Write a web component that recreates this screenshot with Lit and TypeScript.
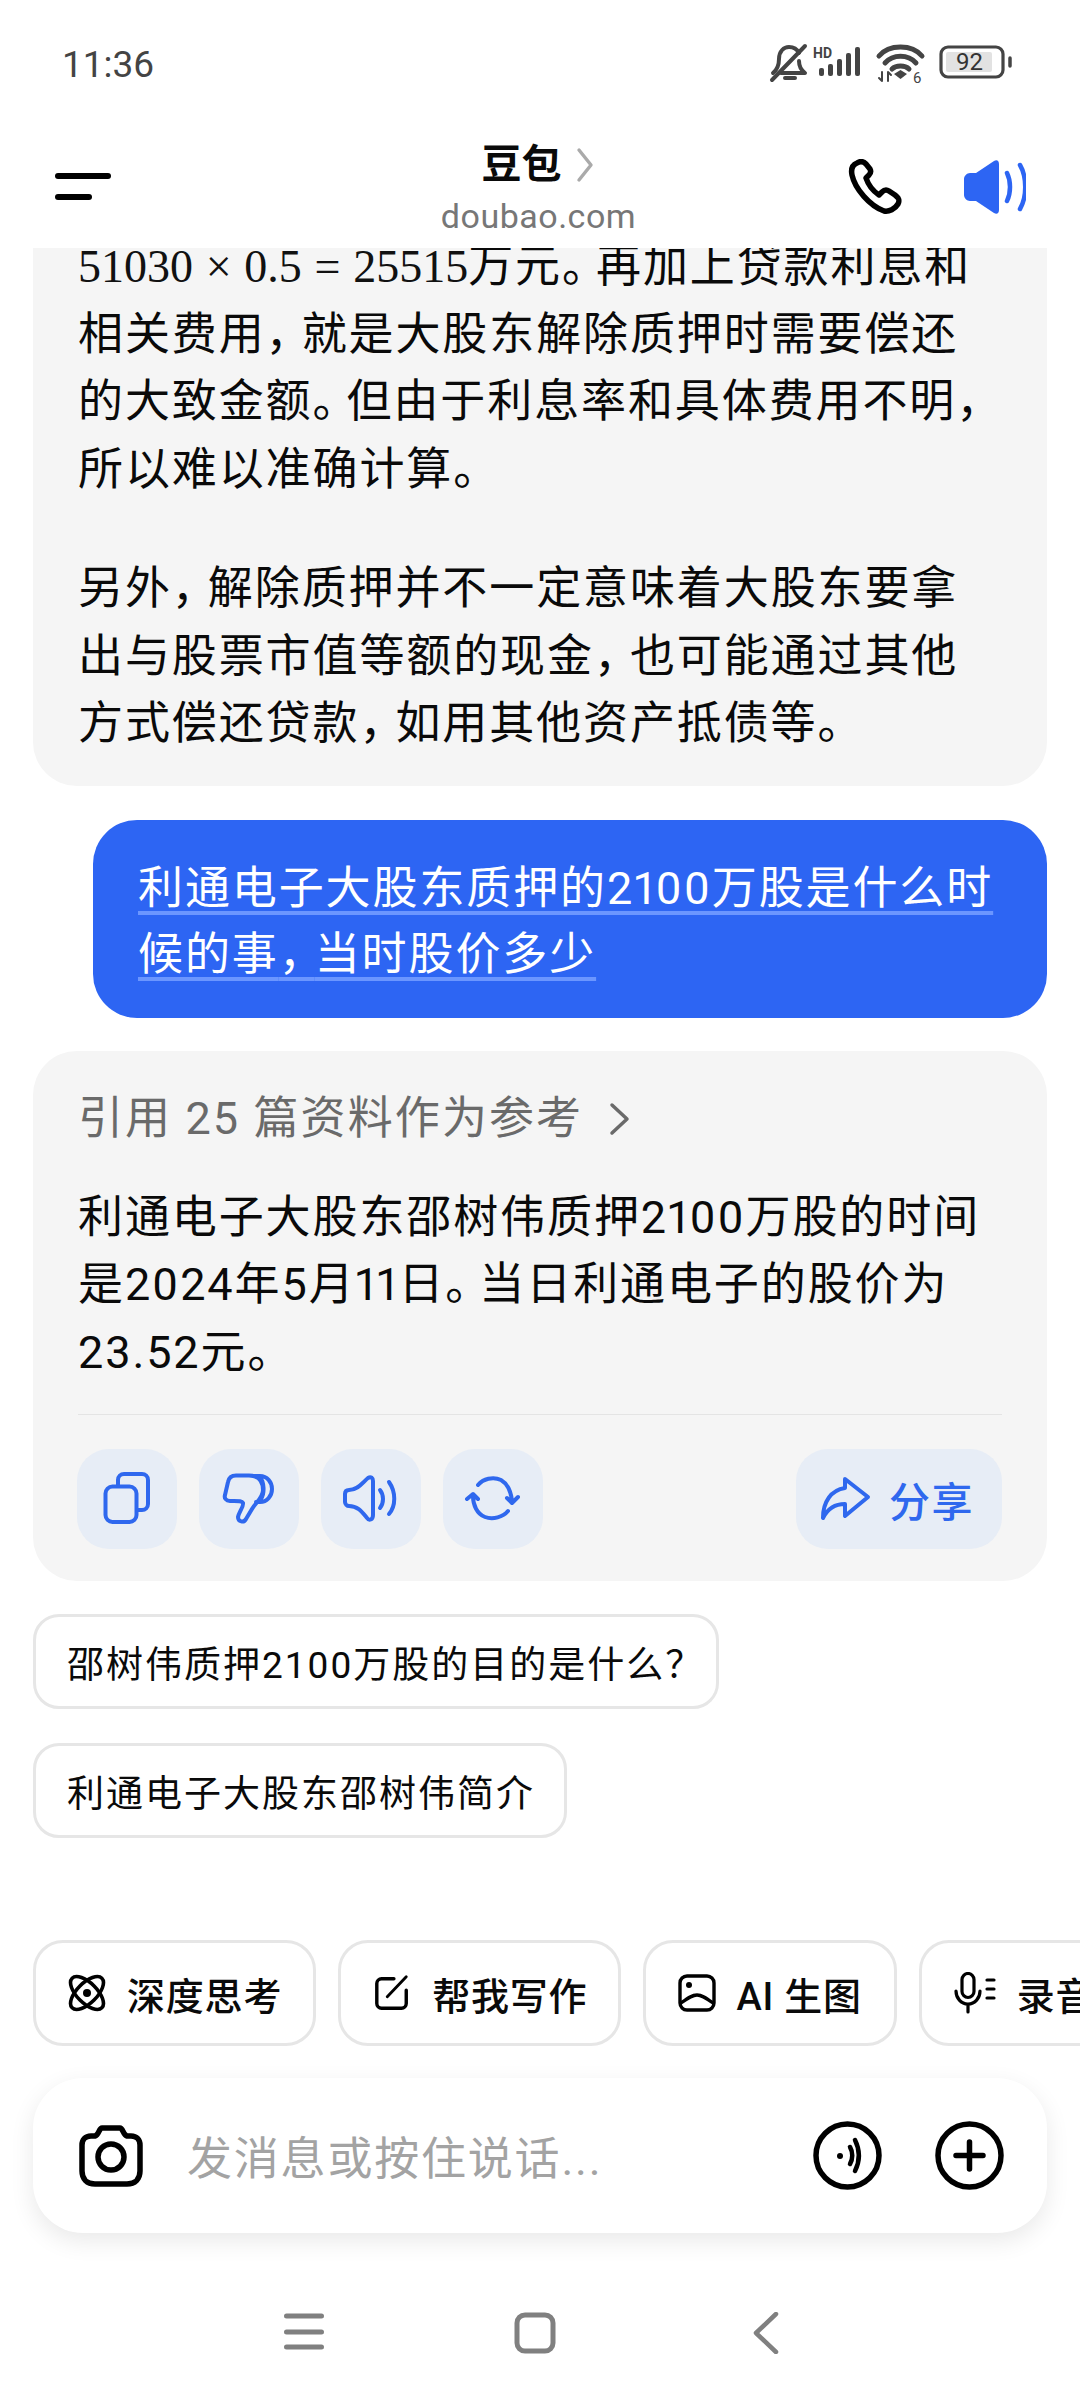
import { LitElement, html, css, svg } from "lit";
import { customElement } from "lit/decorators.js";

const punct = (s: string) =>
  s.split(/([，。])/).map((part) =>
    part === "，" ? html`<span class="comma">，</span>` : part === "。" ? html`<span class="stop">。</span>` : part
  );

const ic = (w: number, h: number, vb: string, body: unknown, cls = "") =>
  html`<svg class=${cls} width=${w} height=${h} viewBox=${vb} fill="none" stroke="currentColor" stroke-linecap="round" stroke-linejoin="round">${body}</svg>`;

@customElement("app-root")
export class AppRoot extends LitElement {
  static styles = css`
    :host { display: flex; flex-direction: column; width: 1080px; height: 2400px; background: #fff; overflow: hidden;
      font-family: Roboto, "Noto Sans CJK SC", sans-serif; color: #0a0a0a; }
    svg { display: block; flex: none; }
    .status { height: 125px; flex: none; display: flex; align-items: center; padding: 3px 51px 0 62px; box-sizing: border-box; color: #444; }
    .time { font-size: 37px; font-weight: 400; flex: 1; letter-spacing: 0; }
    .sicons { display: flex; align-items: center; }
    .header { height: 123px; flex: none; display: flex; align-items: center; position: relative; padding: 0 54px 0 55px; box-sizing: border-box; }
    .burger { display: flex; flex-direction: column; gap: 15px; width: 56px; flex: 1; }
    .burger i { display: block; height: 6px; border-radius: 3px; background: #000; width: 56px; }
    .burger i + i { width: 37px; }
    .title { flex: 2; display: flex; flex-direction: column; align-items: center; margin-left: -4px; padding-top: 4px; }
    .t1 { display: flex; align-items: center; gap: 14px; font-size: 40px; font-weight: 700; line-height: 46px; margin-left: -2px; }
    .t2 { font-size: 34px; color: #777; line-height: 40px; margin-top: 8px; letter-spacing: .5px; }
    .hr { flex: 1; display: flex; justify-content: flex-end; align-items: center; gap: 60px; }
    .main { flex: 1; min-height: 0; overflow: hidden; display: flex; flex-direction: column; padding: 0 33px; }
    .bubble { background: #f5f5f5; border-radius: 44px; padding: 0 45px; flex: none; }
    .first { margin-top: -15px; border-radius: 0 0 44px 44px; padding-bottom: 28px; }
    .line { font-size: 45px; line-height: 67.5px; letter-spacing: 1.9px; white-space: nowrap; font-variant-numeric: proportional-nums; }
    .para { margin-top: 52px; }
    .math { font-family: "Liberation Serif", serif; font-size: 46px; letter-spacing: 0; word-spacing: 1.2px; color: #111; }
    .comma { letter-spacing: -9px; }
    .stop { letter-spacing: -11px; }
    .user { margin: 34px 0 0 60px; background: #2d65f3; color: #fff; border-radius: 44px; padding: 36px 45px 30px; flex: none; }
    .user .line { line-height: 66px; }
    .user span.u { text-decoration: underline; text-decoration-color: #6b96ff; text-decoration-thickness: 4px; text-underline-offset: 7px; text-decoration-skip-ink: none; }
    .ai { margin-top: 33px; padding-top: 35px; padding-bottom: 32px; }
    .cite { display: flex; align-items: center; font-size: 45px; line-height: 66px; color: #6a6a6a; letter-spacing: 2.1px; gap: 26px; white-space: nowrap; }
    .answer { margin-top: 32px; }
    .divider { height: 1px; background: #e4e4e4; margin-top: 28px; }
    .actions { margin: 34px 0 0 -1px; display: flex; gap: 22px; color: #2f68ee; }
    .act { width: 100px; height: 100px; border-radius: 32px; background: #e7edf6; }
    .share { margin-left: auto; height: 100px; width: 206px; border-radius: 32px; background: #e7edf6; display: flex; align-items: center; gap: 18px; padding-left: 25px; box-sizing: border-box; font-size: 41px; font-weight: 500; letter-spacing: 1.5px; white-space: nowrap; }
    .sug { align-self: flex-start; flex: none; box-sizing: border-box; height: 95px; border: 3px solid #e6e6e6; border-radius: 26px; display: flex; align-items: center; padding: 0 29px 0 31px; font-size: 37px; letter-spacing: 2px; white-space: pre; }
    .qm { letter-spacing: -15px; }
    .s1 { margin-top: 33px; }
    .s2 { margin-top: 34px; }
    .tools { flex: none; display: flex; gap: 22px; padding-left: 33px; height: 106px; overflow: hidden; }
    .chip { flex: none; box-sizing: border-box; height: 106px; border: 3px solid #e6e6e6; border-radius: 30px; display: flex; align-items: center; gap: 21px; font-size: 38px; font-weight: 500; letter-spacing: .8px; padding: 0 31px 0 32px; white-space: nowrap; }
    .c3 { gap: 20px; padding-right: 32px; }
    .input { flex: none; margin: 32px 33px 0; height: 155px; border-radius: 50px; background: #fff; box-shadow: 0 8px 24px rgba(0,0,0,.09); display: flex; align-items: center; padding: 0 43px 0 46px; gap: 44px; }
    .ph { flex: 1; font-size: 45px; color: #a3a3a3; letter-spacing: 1.8px; white-space: nowrap; }
    .ir { display: flex; gap: 53px; }
    .nav { flex: none; height: 167px; display: flex; align-items: flex-start; justify-content: center; color: #808080; padding: 79px 18px 0 0; box-sizing: border-box; }
    .n1 { margin-right: 190px; }
    .n2 { margin-right: 197px; }
  `;

  render() {
    return html`
      <div class="status">
        <div class="time">11:36</div>
        <div class="sicons">
          <svg width="260" height="44" viewBox="0 0 260 44" fill="none" stroke="#444" stroke-linecap="round" stroke-linejoin="round">
            <path stroke-width="4" d="M4 31C9 27 10 22 10 17C10 9 15 5 20 5C25 5 28 7 30 11M30 19C30 24 32 28 36 31H12M16 36H26" />
            <path stroke-width="4" d="M3 38L36 4" />
            <text x="44" y="16" font-family="Roboto" font-size="14" font-weight="700" fill="#444" stroke="none">HD</text>
            <g fill="#444" stroke="none">
              <rect x="50" y="26" width="5" height="8" rx="2" /><rect x="59" y="22" width="5" height="12" rx="2" /><rect x="68" y="17" width="5" height="17" rx="2" /><rect x="77" y="11" width="5" height="23" rx="2" /><rect x="86" y="5" width="5" height="29" rx="2" />
            </g>
            <path stroke-width="5" d="M110 14C120 2 143 2 153 14M116 21C124 12 139 12 147 21M123 27C127 23 136 23 140 27" />
            <path fill="#444" stroke="none" d="M125 32L131.5 28L138 32L131.5 37Z" />
            <path stroke-width="2" d="M113 30V39M119 30V39M110 36L113 39M119 30L122 33" />
            <text x="144" y="41" font-family="Roboto" font-size="15" fill="#444" stroke="none">6</text>
            <rect x="172" y="5" width="62" height="30" rx="7" stroke-width="3.2" />
            <rect x="177" y="10" width="46" height="20" rx="2" fill="#e2e2e2" stroke="none" />
            <text x="187" y="28" font-family="Roboto" font-size="24" fill="#333" stroke="none">92</text>
            <path stroke-width="3.5" d="M241 16V24" />
          </svg>
        </div>
      </div>
      <div class="header">
        <div class="burger"><i></i><i></i></div>
        <div class="title">
          <div class="t1">豆包${ic(18, 36, "0 0 18 36", svg`<path stroke="#aaa" stroke-width="3.4" d="M3 3L15 18L3 33"/>`)}</div>
          <div class="t2">doubao.com</div>
        </div>
        <div class="hr">
          ${ic(56, 56, "0 0 56 56", svg`<path stroke="#000" stroke-width="5.5" d="M9 4C4 6 3 11 4 16C7 30 22 47 36 52C41 53 47 50 50 45C52 41 51 39 47 36L41 32C38 30 36 31 34 33L31 36C25 32 20 25 18 19L21 16C23 14 23 12 22 10L18 5C15 2 12 2 9 4Z"/>`)}
          ${ic(62, 56, "0 0 62 56", svg`<path fill="#2d65f3" stroke="none" d="M6 14H12L30 2C33 0 35 2 35 5V51C35 54 33 56 30 54L12 42H6C3 42 0 39 0 36V20C0 17 3 14 6 14Z"/><path stroke="#2d65f3" stroke-width="4.5" d="M43 14C47 22 47 34 43 42M56 6C63 18 63 38 56 50"/>`)}
        </div>
      </div>
      <div class="main">
        <div class="bubble first">
          <div class="line"><span class="math">51030 × 0.5 = 25515</span>万元${punct("。再加上贷款利息和")}</div>
          <div class="line">${punct("相关费用，就是大股东解除质押时需要偿还")}</div>
          <div class="line">${punct("的大致金额。但由于利息率和具体费用不明，")}</div>
          <div class="line">${punct("所以难以准确计算。")}</div>
          <div class="line para">${punct("另外，解除质押并不一定意味着大股东要拿")}</div>
          <div class="line">${punct("出与股票市值等额的现金，也可能通过其他")}</div>
          <div class="line">${punct("方式偿还贷款，如用其他资产抵债等。")}</div>
        </div>
        <div class="user">
          <div class="line"><span class="u">利通电子大股东质押的2100万股是什么时</span></div>
          <div class="line"><span class="u">${punct("候的事，当时股价多少")}</span></div>
        </div>
        <div class="bubble ai">
          <div class="cite">引用 25 篇资料作为参考${ic(22, 36, "0 0 22 36", svg`<path stroke="#6a6a6a" stroke-width="3.5" d="M3 4L18 18L3 32"/>`)}</div>
          <div class="answer">
            <div class="line">利通电子大股东邵树伟质押2100万股的时间</div>
            <div class="line">${punct("是2024年5月11日。当日利通电子的股价为")}</div>
            <div class="line">${punct("23.52元。")}</div>
          </div>
          <div class="divider"></div>
          <div class="actions">
            <div class="act">${ic(100, 100, "0 0 100 100", svg`<g stroke-width="4"><rect x="28.5" y="37.5" width="31" height="35.5" rx="7"/><path d="M41 37V31A6 6 0 0 1 47 25H65A6 6 0 0 1 71 31V55A6 6 0 0 1 65 61H60"/></g>`)}</div>
            <div class="act">${ic(100, 100, "0 0 100 100", svg`<g stroke-width="4"><path d="M37 26.5H50C60 26.5 64 33 64 41C64 49 57 53 53 60L47 70C45 74 39 73 39 68C40 63 45 57 44 54C43 52 40 52 35 52H31C27 52 25 49 26 46L29 33C30 28 33 26.5 37 26.5Z"/><path d="M55 27H61C68 27 73 33 73 40C73 47 68 53 61 53H57M61 28C65 33 66 44 62 50"/></g>`)}</div>
            <div class="act">${ic(100, 100, "0 0 100 100", svg`<g stroke-width="4"><path d="M24 45C24 42 26 41 28 41C37 41 42 33 47 29C50 27 52 29 52 32V66C52 71 48 72 46 69C41 63 37 57 28 57C26 57 24 55 24 53Z"/><path d="M59 41C63 46 63 54 59 59M68 33C75 43 75 57 68 65"/></g>`)}</div>
            <div class="act">${ic(100, 100, "0 0 100 100", svg`<g stroke-width="4"><path d="M35 36C40 30 50 27 58 31C65 35 68 43 69 52M64 49L69 54L75 48M65 62C60 68 50 71 42 68C34 65 30 56 30 47M24 50L30 45L35 50"/></g>`)}</div>
            <div class="share">${ic(50, 44, "0 0 50 44", svg`<path stroke-width="4" d="M24 2L47 20L24 39V27C14 27 7 31 2 41C2 25 10 13 24 11Z"/>`)}分享</div>
          </div>
        </div>
        <div class="sug s1"><span>邵树伟质押2100万股的目的是什么<span class="qm">？</span></span></div>
        <div class="sug s2">利通电子大股东邵树伟简介</div>
      </div>
      <div class="tools">
        <div class="chip">${ic(38, 38, "0 0 38 38", svg`<g stroke="#000" stroke-width="3.6"><ellipse cx="19" cy="19" rx="21" ry="10" transform="rotate(45 19 19)"/><ellipse cx="19" cy="19" rx="21" ry="10" transform="rotate(-45 19 19)"/></g><circle cx="19" cy="19" r="4" fill="#000" stroke="none"/>`)}深度思考</div>
        <div class="chip">${ic(38, 40, "0 0 40 40", svg`<g stroke="#000" stroke-width="3.6"><path d="M22 5H9A5 5 0 0 0 4 10V31A5 5 0 0 0 9 36H30A5 5 0 0 0 35 31V17"/><path d="M15 24L35 3" stroke-width="3"/></g>`)}帮我写作</div>
        <div class="chip c3">${ic(38, 38, "0 0 38 38", svg`<g stroke="#000" stroke-width="3.4"><rect x="2" y="2" width="34" height="34" rx="7"/><path d="M3 29C10 24 14 21 19 21C24 21 28 24 35 29"/></g><circle cx="11" cy="11" r="3" fill="#000" stroke="none"/>`)}AI 生图</div>
        <div class="chip">${ic(42, 42, "0 0 42 42", svg`<g stroke="#000" stroke-width="3.2"><rect x="8" y="1.5" width="12" height="24" rx="6"/><path d="M2 19C2 26 7 32 14 32C21 32 26 26 26 19M14 32V40M33 8H40M33 17H40M33 26H40"/></g>`)}录音</div>
      </div>
      <div class="input">
        ${ic(64, 62, "0 0 64 62", svg`<g stroke="#000" stroke-width="5.5"><path d="M23 3H41C44 3 44 10 48 11H52C58 11 61 15 61 20V46C61 54 56 59 48 59H16C8 59 3 54 3 46V20C3 15 6 11 12 11H16C20 10 20 3 23 3Z"/><circle cx="32" cy="32" r="13"/></g>`)}
        <div class="ph">发消息或按住说话...</div>
        <div class="ir">
          ${ic(69, 69, "0 0 69 69", svg`<g stroke="#000" stroke-width="5.5"><circle cx="34.5" cy="34.5" r="31.5"/><path d="M37 26C40 31 40 38 37 43M42 19C47 29 47 40 42 50" stroke-width="4.5"/></g><circle cx="27" cy="35" r="3" fill="#000" stroke="none"/>`)}
          ${ic(69, 69, "0 0 69 69", svg`<g stroke="#000" stroke-width="5.5"><circle cx="34.5" cy="34.5" r="31.5"/><path d="M34.5 21V48M21 34.5H48"/></g>`)}
        </div>
      </div>
      <div class="nav">
        ${ic(40, 40, "0 0 40 40", svg`<path stroke-width="5" d="M2.5 4H37.5M2.5 20H37.5M2.5 35H37.5"/>`, "n1")}
        ${ic(42, 42, "0 0 42 42", svg`<rect x="3" y="3" width="36" height="36" rx="8" stroke-width="5"/>`, "n2")}
        ${ic(26, 42, "0 0 26 42", svg`<path stroke-width="4.5" d="M23 2L3 21L23 40"/>`)}
      </div>
    `;
  }
}
